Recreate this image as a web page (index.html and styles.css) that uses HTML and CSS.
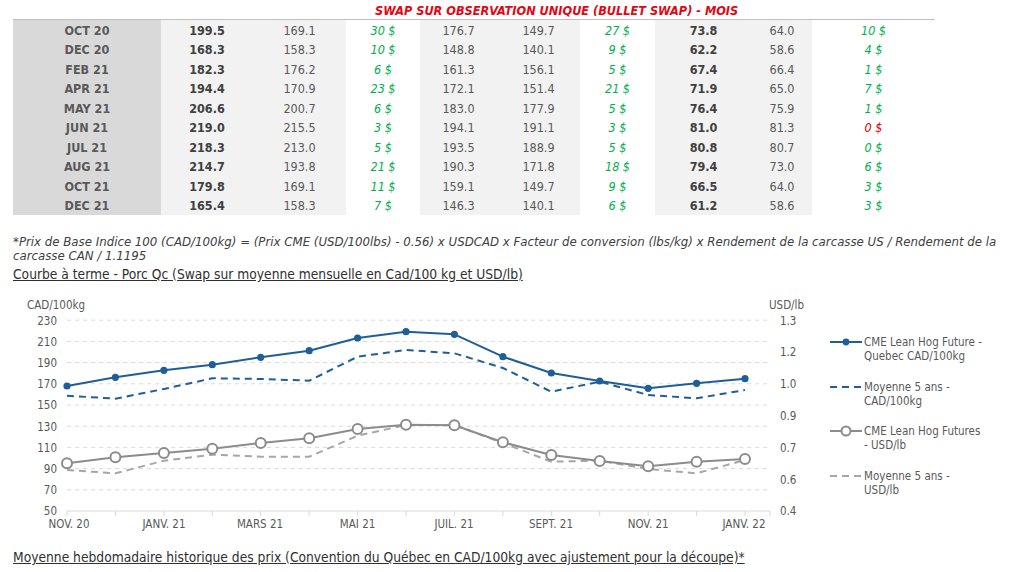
FILE: index.html
```html
<!DOCTYPE html>
<html lang="fr">
<head>
<meta charset="utf-8">
<title>Swap porc</title>
<link rel="stylesheet" href="styles.css">
</head>
<body>
<div class="page">
  <div class="swap-head"><span class="swap-title">SWAP SUR OBSERVATION UNIQUE (BULLET SWAP) - MOIS</span></div>
  <div class="tbl">
    <div class="c m">OCT 20</div><div class="c sb">199.5</div><div class="c sr">169.1</div><div class="c d">30 $</div><div class="c sr">176.7</div><div class="c sr">149.7</div><div class="c d">27 $</div><div class="c sb">73.8</div><div class="c sr">64.0</div><div class="c d">10 $</div>
    <div class="c m">DEC 20</div><div class="c sb">168.3</div><div class="c sr">158.3</div><div class="c d">10 $</div><div class="c sr">148.8</div><div class="c sr">140.1</div><div class="c d">9 $</div><div class="c sb">62.2</div><div class="c sr">58.6</div><div class="c d">4 $</div>
    <div class="c m">FEB 21</div><div class="c sb">182.3</div><div class="c sr">176.2</div><div class="c d">6 $</div><div class="c sr">161.3</div><div class="c sr">156.1</div><div class="c d">5 $</div><div class="c sb">67.4</div><div class="c sr">66.4</div><div class="c d">1 $</div>
    <div class="c m">APR 21</div><div class="c sb">194.4</div><div class="c sr">170.9</div><div class="c d">23 $</div><div class="c sr">172.1</div><div class="c sr">151.4</div><div class="c d">21 $</div><div class="c sb">71.9</div><div class="c sr">65.0</div><div class="c d">7 $</div>
    <div class="c m">MAY 21</div><div class="c sb">206.6</div><div class="c sr">200.7</div><div class="c d">6 $</div><div class="c sr">183.0</div><div class="c sr">177.9</div><div class="c d">5 $</div><div class="c sb">76.4</div><div class="c sr">75.9</div><div class="c d">1 $</div>
    <div class="c m">JUN 21</div><div class="c sb">219.0</div><div class="c sr">215.5</div><div class="c d">3 $</div><div class="c sr">194.1</div><div class="c sr">191.1</div><div class="c d">3 $</div><div class="c sb">81.0</div><div class="c sr">81.3</div><div class="c d neg">0 $</div>
    <div class="c m">JUL 21</div><div class="c sb">218.3</div><div class="c sr">213.0</div><div class="c d">5 $</div><div class="c sr">193.5</div><div class="c sr">188.9</div><div class="c d">5 $</div><div class="c sb">80.8</div><div class="c sr">80.7</div><div class="c d">0 $</div>
    <div class="c m">AUG 21</div><div class="c sb">214.7</div><div class="c sr">193.8</div><div class="c d">21 $</div><div class="c sr">190.3</div><div class="c sr">171.8</div><div class="c d">18 $</div><div class="c sb">79.4</div><div class="c sr">73.0</div><div class="c d">6 $</div>
    <div class="c m">OCT 21</div><div class="c sb">179.8</div><div class="c sr">169.1</div><div class="c d">11 $</div><div class="c sr">159.1</div><div class="c sr">149.7</div><div class="c d">9 $</div><div class="c sb">66.5</div><div class="c sr">64.0</div><div class="c d">3 $</div>
    <div class="c m">DEC 21</div><div class="c sb">165.4</div><div class="c sr">158.3</div><div class="c d">7 $</div><div class="c sr">146.3</div><div class="c sr">140.1</div><div class="c d">6 $</div><div class="c sb">61.2</div><div class="c sr">58.6</div><div class="c d">3 $</div>
  </div>

  <p class="note">*Prix de Base Indice 100 (CAD/100kg) = (Prix CME (USD/100lbs) - 0.56) x USDCAD x Facteur de conversion (lbs/kg) x Rendement de la carcasse US / Rendement de la<br>carcasse CAN / 1.1195</p>
  <h2 class="section-title">Courbe à terme - Porc Qc (Swap sur moyenne mensuelle en Cad/100 kg et USD/lb)</h2>

  <div class="chart">
    <svg class="plot" width="802" height="245" viewBox="0 0 802 245">
      <g transform="translate(-13 -290)">
        <g class="grid">
          <line x1="67" y1="320.2" x2="770" y2="320.2"/>
          <line x1="67" y1="341.4" x2="770" y2="341.4"/>
          <line x1="67" y1="362.6" x2="770" y2="362.6"/>
          <line x1="67" y1="383.8" x2="770" y2="383.8"/>
          <line x1="67" y1="405" x2="770" y2="405"/>
          <line x1="67" y1="426.2" x2="770" y2="426.2"/>
          <line x1="67" y1="447.4" x2="770" y2="447.4"/>
          <line x1="67" y1="468.6" x2="770" y2="468.6"/>
          <line x1="67" y1="489.8" x2="770" y2="489.8"/>
        </g>
        <g class="axis">
          <line x1="67" y1="511" x2="770" y2="511"/>
          <path d="M67 511v5M115.4 511v5M163.9 511v5M212.3 511v5M260.7 511v5M309.2 511v5M357.6 511v5M406 511v5M454.4 511v5M502.9 511v5M551.3 511v5M599.7 511v5M648.2 511v5M696.6 511v5M745 511v5M770 511v5"/>
        </g>
        <g class="lbl">
          <text x="27" y="309">CAD/100kg</text>
          <text x="769" y="309">USD/lb</text>
        </g>
        <g class="lbl end">
          <text x="57" y="324.5">230</text>
          <text x="57" y="345.7">210</text>
          <text x="57" y="366.9">190</text>
          <text x="57" y="388.1">170</text>
          <text x="57" y="409.3">150</text>
          <text x="57" y="430.5">130</text>
          <text x="57" y="451.7">110</text>
          <text x="57" y="472.9">90</text>
          <text x="57" y="494.1">70</text>
          <text x="57" y="515">50</text>
        </g>
        <g class="lbl">
          <text x="780" y="324.5">1.3</text>
          <text x="780" y="356.3">1.2</text>
          <text x="780" y="388.1">1.0</text>
          <text x="780" y="419.9">0.9</text>
          <text x="780" y="451.7">0.7</text>
          <text x="780" y="483.5">0.6</text>
          <text x="780" y="515">0.4</text>
        </g>
        <g class="lbl mid">
          <text x="69" y="527.5">NOV. 20</text>
          <text x="164" y="527.5">JANV. 21</text>
          <text x="260" y="527.5">MARS 21</text>
          <text x="357.6" y="527.5">MAI 21</text>
          <text x="454" y="527.5">JUIL. 21</text>
          <text x="551" y="527.5">SEPT. 21</text>
          <text x="648.2" y="527.5">NOV. 21</text>
          <text x="744" y="527.5">JANV. 22</text>
        </g>

        <polyline class="s-gray-dash" points="67,470 115.4,473.3 163.9,460.7 212.3,454.7 260.7,456.7 309.2,456.7 357.6,435.7 406,425 454.4,425 502.9,443 551.3,461.7 599.7,460.7 648.2,469 696.6,473.3 745,460"/>
        <polyline class="s-gray" points="67,463.3 115.4,457.3 163.9,453 212.3,448.7 260.7,443 309.2,438.3 357.6,429 406,424.7 454.4,425.3 502.9,442.3 551.3,455 599.7,461 648.2,466.3 696.6,461.7 745,459"/>
        <g class="m-gray">
          <circle cx="67" cy="463.3" r="5"/><circle cx="115.4" cy="457.3" r="5"/><circle cx="163.9" cy="453" r="5"/><circle cx="212.3" cy="448.7" r="5"/><circle cx="260.7" cy="443" r="5"/><circle cx="309.2" cy="438.3" r="5"/><circle cx="357.6" cy="429" r="5"/><circle cx="406" cy="424.7" r="5"/><circle cx="454.4" cy="425.3" r="5"/><circle cx="502.9" cy="442.3" r="5"/><circle cx="551.3" cy="455" r="5"/><circle cx="599.7" cy="461" r="5"/><circle cx="648.2" cy="466.3" r="5"/><circle cx="696.6" cy="461.7" r="5"/><circle cx="745" cy="459" r="5"/>
        </g>

        <polyline class="s-blue-dash" points="67,395.7 115.4,398.7 163.9,389 212.3,378.3 260.7,379 309.2,380.7 357.6,356.7 406,350 454.4,353.3 502.9,368 551.3,391.7 599.7,381.7 648.2,395 696.6,398.3 745,390"/>
        <polyline class="s-blue" points="67,386 115.4,377.3 163.9,370.3 212.3,364.7 260.7,357.3 309.2,350.7 357.6,338 406,331.7 454.4,334.3 502.9,356.7 551.3,373 599.7,381 648.2,388.3 696.6,383.3 745,378.7"/>
        <g class="m-blue">
          <circle cx="67" cy="386" r="3.6"/><circle cx="115.4" cy="377.3" r="3.6"/><circle cx="163.9" cy="370.3" r="3.6"/><circle cx="212.3" cy="364.7" r="3.6"/><circle cx="260.7" cy="357.3" r="3.6"/><circle cx="309.2" cy="350.7" r="3.6"/><circle cx="357.6" cy="338" r="3.6"/><circle cx="406" cy="331.7" r="3.6"/><circle cx="454.4" cy="334.3" r="3.6"/><circle cx="502.9" cy="356.7" r="3.6"/><circle cx="551.3" cy="373" r="3.6"/><circle cx="599.7" cy="381" r="3.6"/><circle cx="648.2" cy="388.3" r="3.6"/><circle cx="696.6" cy="383.3" r="3.6"/><circle cx="745" cy="378.7" r="3.6"/>
        </g>
      </g>
    </svg>

    <div class="legend">
      <div class="legend-item">
        <svg class="key" width="32" height="14" viewBox="0 0 32 14"><line class="s-blue" x1="0" y1="7" x2="32" y2="7"/><circle class="m-blue-key" cx="16" cy="7" r="3.4"/></svg>
        <span class="legend-text">CME Lean Hog Future -<br>Quebec CAD/100kg</span>
      </div>
      <div class="legend-item">
        <svg class="key" width="32" height="14" viewBox="0 0 32 14"><line class="s-blue-dash" x1="0" y1="7" x2="32" y2="7"/></svg>
        <span class="legend-text">Moyenne 5 ans -<br>CAD/100kg</span>
      </div>
      <div class="legend-item">
        <svg class="key" width="32" height="14" viewBox="0 0 32 14"><line class="s-gray" x1="0" y1="7" x2="32" y2="7"/><circle class="m-gray-key" cx="16" cy="7" r="4.5"/></svg>
        <span class="legend-text">CME Lean Hog Futures<br>- USD/lb</span>
      </div>
      <div class="legend-item">
        <svg class="key" width="32" height="14" viewBox="0 0 32 14"><line class="s-gray-dash" x1="0" y1="7" x2="32" y2="7"/></svg>
        <span class="legend-text">Moyenne 5 ans -<br>USD/lb</span>
      </div>
    </div>
  </div>

  <h2 class="section-title bottom">Moyenne hebdomadaire historique des prix (Convention du Québec en CAD/100kg avec ajustement pour la découpe)*</h2>
</div>
</body>
</html>
```

FILE: styles.css
```css
html, body {
  margin: 0;
  padding: 0;
  background: #ffffff;
}

body {
  font-family: "DejaVu Sans", "Liberation Sans", sans-serif;
  font-stretch: condensed;
  color: #595959;
}

.page {
  width: 1024px;
  height: 572px;
  box-sizing: border-box;
  padding: 0 13px;
  overflow: hidden;
}

.swap-head {
  width: 922px;
  height: 20px;
  box-sizing: border-box;
  border-bottom: 1px solid #bfbfbf;
  padding-left: 362px;
  line-height: 19px;
}

.swap-title {
  font-size: 12.6px;
  font-weight: bold;
  font-style: italic;
  color: #e30613;
  white-space: nowrap;
}

.tbl {
  display: grid;
  width: 922px;
  grid-template-columns: 148px 92px 93px 74px 77px 83px 75px 97px 60px 123px;
  grid-auto-rows: 19.5px;
  font-size: 12.5px;
}

.c {
  display: flex;
  align-items: center;
  justify-content: center;
  white-space: nowrap;
  padding-top: 1px;
  box-sizing: border-box;
}

.m {
  background: #d9d9d9;
  font-weight: bold;
  color: #595959;
}

.sb {
  background: #f2f2f2;
  font-weight: bold;
  color: #404040;
}

.sr {
  background: #f2f2f2;
  color: #595959;
}

.d {
  background: #ffffff;
  font-style: italic;
  color: #00b050;
}

.d.neg {
  color: #e00000;
}

.note {
  margin: 20px 0 0;
  font-size: 13.1px;
  font-style: italic;
  line-height: 14px;
  color: #404040;
  white-space: nowrap;
}

.section-title {
  margin: 3px 0 0;
  font-size: 13.7px;
  font-weight: normal;
  line-height: 16px;
  color: #303030;
  text-decoration: underline;
  white-space: nowrap;
}

.section-title.bottom {
  margin-top: 14px;
}

.chart {
  display: flex;
  height: 245px;
  margin-top: 8px;
}

.plot {
  display: block;
  flex: none;
}

.grid line {
  stroke: #d9d9d9;
  stroke-width: 1;
  stroke-dasharray: 4 4;
}

.axis line,
.axis path {
  stroke: #d9d9d9;
  stroke-width: 1;
  fill: none;
}

.lbl text {
  font-family: "DejaVu Sans", "Liberation Sans", sans-serif;
  font-stretch: condensed;
  font-size: 11.5px;
  fill: #595959;
}

.lbl.end text {
  text-anchor: end;
}

.lbl.mid text {
  text-anchor: middle;
}

.s-blue {
  fill: none;
  stroke: #1f5f99;
  stroke-width: 2;
  stroke-linejoin: round;
}

.s-blue-dash {
  fill: none;
  stroke: #1f5f99;
  stroke-width: 2;
  stroke-dasharray: 7 5;
}

.s-gray {
  fill: none;
  stroke: #8c8c8c;
  stroke-width: 2;
  stroke-linejoin: round;
}

.s-gray-dash {
  fill: none;
  stroke: #a6a6a6;
  stroke-width: 2;
  stroke-dasharray: 7 5;
}

.m-blue circle,
.m-blue-key {
  fill: #1f5f99;
  stroke: none;
}

.m-gray circle,
.m-gray-key {
  fill: #ffffff;
  stroke: #8c8c8c;
  stroke-width: 2;
}

.legend {
  display: flex;
  flex-direction: column;
  gap: 16.7px;
  margin-left: 15px;
  padding-top: 45px;
}

.legend-item {
  display: flex;
  align-items: flex-start;
  gap: 2px;
}

.key {
  display: block;
  flex: none;
}

.legend-text {
  font-size: 11.5px;
  line-height: 14px;
  color: #595959;
  white-space: nowrap;
}
```
